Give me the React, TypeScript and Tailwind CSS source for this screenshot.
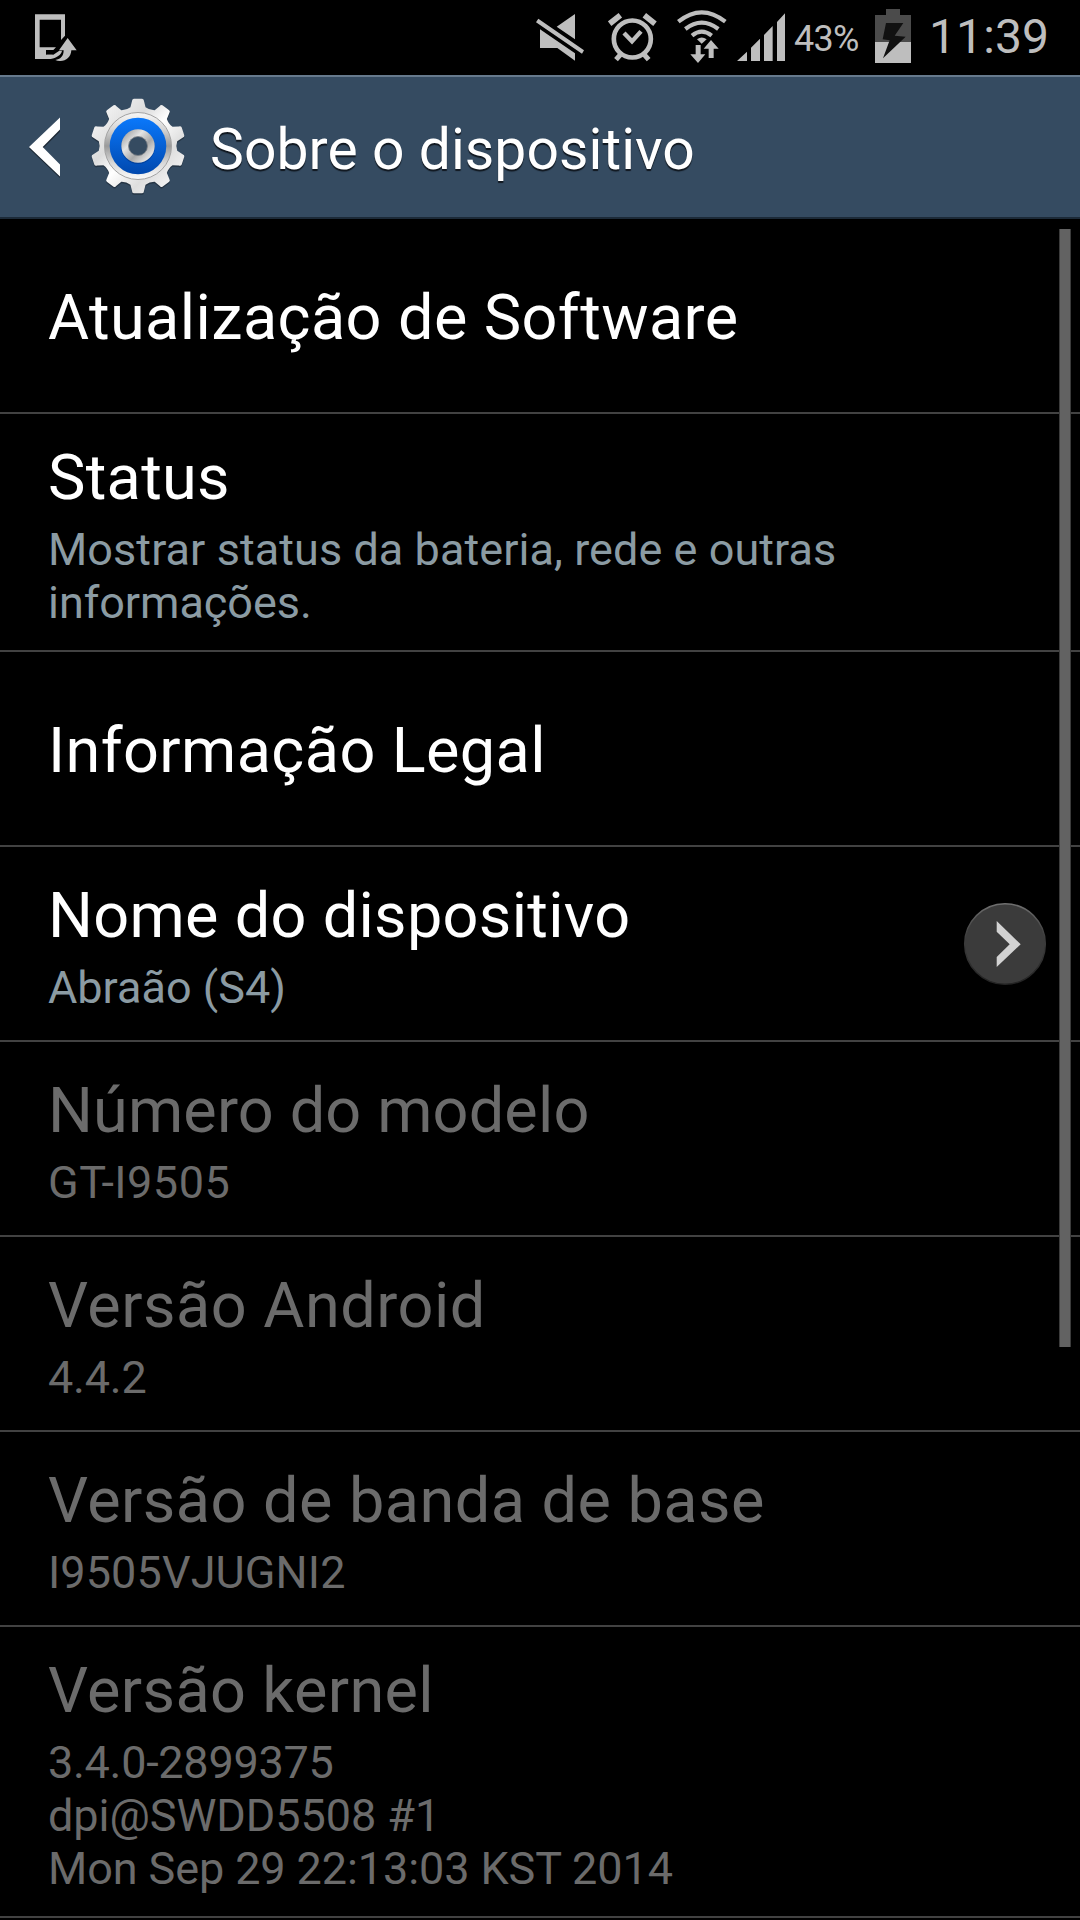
import type { ReactNode } from "react";

const GRAY = "#bebebe";

function gearPath(cx: number, cy: number, outer: number, inner: number, teeth: number) {
  const pts: string[] = [];
  const step = 360 / teeth;
  const at = (r: number, deg: number) => {
    const a = ((deg - 90) * Math.PI) / 180;
    return `${(cx + r * Math.cos(a)).toFixed(2)} ${(cy + r * Math.sin(a)).toFixed(2)}`;
  };
  for (let i = 0; i < teeth; i++) {
    const c = i * step;
    pts.push(
      `${i === 0 ? "M" : "L"}${at(inner, c - 11)}`,
      `L${at(outer - 2.2, c - 7.6)}`,
      `Q${at(outer, c - 7.2)} ${at(outer, c - 5)}`,
      `L${at(outer, c + 5)}`,
      `Q${at(outer, c + 7.2)} ${at(outer - 2.2, c + 7.6)}`,
      `L${at(inner, c + 11)}`,
      `Q${at(inner - 2, c + step / 2)} ${at(inner, c + step - 11)}`
    );
  }
  return pts.join(" ") + "Z";
}

function GearIcon() {
  return (
    <svg className="ml-[29px] -mt-[2px] size-[98px] shrink-0" viewBox="-49 -49 98 98">
      <defs>
        <linearGradient id="metal" x1="0" y1="0" x2="1" y2="1">
          <stop offset="0.1" stopColor="#f4f4f4" />
          <stop offset="0.35" stopColor="#dcdcdc" />
          <stop offset="0.5" stopColor="#ffffff" />
          <stop offset="0.7" stopColor="#dedede" />
          <stop offset="0.9" stopColor="#f6f6f6" />
        </linearGradient>
        <linearGradient id="rim" x1="0" y1="0" x2="0" y2="1">
          <stop offset="0" stopColor="#f7f7f7" />
          <stop offset="0.25" stopColor="#d6d6d6" />
          <stop offset="0.5" stopColor="#9a9a9a" />
          <stop offset="0.75" stopColor="#d8d8d8" />
          <stop offset="1" stopColor="#fafafa" />
        </linearGradient>
        <linearGradient id="blue" x1="0" y1="0" x2="0" y2="1">
          <stop offset="0" stopColor="#0a78fb" />
          <stop offset="1" stopColor="#0048ae" />
        </linearGradient>
        <linearGradient id="hub" x1="0" y1="0" x2="1" y2="1">
          <stop offset="0.1" stopColor="#a4a4a4" />
          <stop offset="0.35" stopColor="#e4e4e4" />
          <stop offset="0.6" stopColor="#a9a9a9" />
          <stop offset="0.9" stopColor="#f2f2f2" />
        </linearGradient>
      </defs>
      <path d={gearPath(0, 1.5, 47.5, 39.5, 10)} fill="#17222e" opacity="0.55" />
      <path d={gearPath(0, 0, 47.5, 39.5, 10)} fill="url(#metal)" />
      <circle r="33.5" fill="url(#rim)" stroke="#a3a3a3" strokeWidth="1" />
      <circle r="28.3" fill="url(#blue)" />
      <circle cy="1" r="17" fill="#003a90" opacity="0.7" />
      <circle r="16.7" fill="url(#hub)" />
      <circle r="9.5" fill="#354b61" stroke="#7e8186" strokeWidth="0.8" />
    </svg>
  );
}

function StatusBar() {
  return (
    <div className="flex h-[75px] shrink-0 items-start text-[#bebebe]">
      <svg className="ml-[35px] mt-[14px] h-[48px] w-[42px]" viewBox="105 42 126 144" fill={GRAY}>
        <path fillRule="evenodd" d="M105 43H195V107L183 120V59H119V142H168L160 150H138V164H158L150 177H105Z" />
        <path d="M203 114L230 151H214C213 171 198 184 179 183C174 183 170 182 166 180C181 178 191 169 191 151H177Z" />
        <path d="M140 164H160L178 152H186C184 164 172 172 152 177H140Z" />
      </svg>
      <svg className="ml-[459px] mt-[13px] h-[49px] w-[49px]" viewBox="48 39 147 147" fill={GRAY}>
        <path d="M55 56L192 151L186 161L48 67ZM110 80L165 42V118ZM60 88L165 160V182L112 144H60Z" />
      </svg>
      <svg className="ml-[23px] mt-[13px] h-[49px] w-[49px]" viewBox="263 39 147 147" fill="none" stroke={GRAY}>
        <circle cx="336" cy="117" r="55.5" strokeWidth="14" />
        <path d="M311 99L335 124L362 94" strokeWidth="13" />
        <path d="M268 71L300 46M372 46L404 71" strokeWidth="17" />
        <path d="M301 163L287 179M371 163L385 179" strokeWidth="15" />
      </svg>
      <svg className="ml-[20px] mt-[9px] h-[55px] w-[50px]" viewBox="469 27 150 165">
        <g fill="none" stroke={GRAY} strokeWidth="12.5">
          <path d="M473 65Q543 9 614 65" />
          <path d="M494 87Q543 49 593 87" />
          <path d="M514 107Q543 83 573 107" />
        </g>
        <path d="M529 118Q543 107 558 118L543 131Z" fill={GRAY} />
        <path d="M525 135H540V163H554L532 189L509 163H525ZM571 120L594 146H579V174H564V146H549Z" fill={GRAY} />
      </svg>
      <svg className="ml-[10px] mt-[13px] h-[48px] w-[48px]" viewBox="651 39 144 144" fill={GRAY}>
        <path d="M651 183L681 155V183ZM693 183V143L720 116V183ZM732 183V105L758 78V183ZM771 183V66L795 40V183Z" />
      </svg>
      <span className="ml-[9px] mt-[18px] w-[81px] text-[36px] leading-[42px] tracking-[-0.7px]">43%</span>
      <svg className="mt-[9px] h-[54px] w-[36px]" viewBox="285 27 108 162">
        <path d="M285 45H318V27H360V45H393V126H285Z" fill="#4b4b4b" />
        <path d="M285 126H393V189H285Z" fill={GRAY} />
        <path d="M318 69H370L344 107L377 110L309 175L329 121L308 118Z" fill="#111111" />
      </svg>
      <span className="ml-[18px] mt-[9px] text-[48px] leading-[56px] tracking-[0.1px]">11:39</span>
    </div>
  );
}

function Header() {
  return (
    <header className="flex h-[144px] shrink-0 items-center border-t-2 border-b-2 border-t-[#667a8d] border-b-[#1c2a38] bg-[#354b61]">
      <svg className="ml-[29px] h-[64px] w-[31px] shrink-0 overflow-visible" viewBox="0 0 31 64">
        <path d="M0 33.500L31 4V16.500L14 33.500L31 50.500V63Z" fill="#1d2935" />
        <path d="M0 32L31 2.500V14.500L13.700 32L31 49.500V61.500Z" fill="#ffffff" />
      </svg>
      <GearIcon />
      <h1 className="ml-[23px] mt-[5px] text-[57px] leading-[67px] tracking-[0.07px] text-white [text-shadow:0_2px_1px_#10171f]">
        Sobre o dispositivo
      </h1>
    </header>
  );
}

interface RowProps {
  title: string;
  spacing: string;
  disabled?: boolean;
  action?: ReactNode;
  children?: ReactNode;
}

function Row({ title, spacing, disabled, action, children }: RowProps) {
  return (
    <li className={`flex min-h-[195px] items-center border-b-2 border-[#424242] pb-[21px] pl-12 ${children ? "pt-[27px]" : "pt-[26px]"}`}>
      <div className="flex-1 whitespace-nowrap">
        <h2 className={`text-[63px] leading-[74px] ${spacing} ${disabled ? "text-[#6b6b6b]" : "text-white"}`}>{title}</h2>
        {children && (
          <div className={`mt-[8px] text-[45px] leading-[53px] ${disabled ? "text-[#6b6b6b]" : "text-[#8b9ba3]"}`}>{children}</div>
        )}
      </div>
      {action}
    </li>
  );
}

function ChevronButton() {
  return (
    <button className="mr-[33px] mb-[6px] block size-[84px]" aria-label="Editar">
      <svg viewBox="0 0 84 84">
        <defs>
          <linearGradient id="edge" x1="0" y1="0" x2="0" y2="1">
            <stop offset="0" stopColor="#707070" />
            <stop offset="0.4" stopColor="#3e3e3e" />
            <stop offset="1" stopColor="#232323" />
          </linearGradient>
        </defs>
        <circle cx="42" cy="42" r="40.300" fill="#3b3b3b" stroke="url(#edge)" strokeWidth="1.500" />
        <path d="M33.700 19L57.700 42.300L33.700 65V55L46.700 42.300L33.700 29.700Z" fill="#d2d2d2" />
      </svg>
    </button>
  );
}

export default function App() {
  return (
    <div className="relative flex h-[1920px] w-[1080px] flex-col overflow-hidden bg-black font-[Roboto,sans-serif]">
      <StatusBar />
      <Header />
      <ul>
        <Row title="Atualização de Software" spacing="tracking-[0.4px]" />
        <Row title="Status" spacing="tracking-[0.28px]">
          <p className="tracking-[0.06px]">Mostrar status da bateria, rede e outras</p>
          <p className="tracking-[-0.06px]">informações.</p>
        </Row>
        <Row title="Informação Legal" spacing="tracking-[0.39px]" />
        <Row title="Nome do dispositivo" spacing="tracking-[0.3px]" action={<ChevronButton />}>
          <p>Abraão (S4)</p>
        </Row>
        <Row title="Número do modelo" spacing="tracking-[0.15px]" disabled>
          <p className="tracking-[0.5px]">GT-I9505</p>
        </Row>
        <Row title="Versão Android" spacing="tracking-[0.5px]" disabled>
          <p className="tracking-[-0.2px]">4.4.2</p>
        </Row>
        <Row title="Versão de banda de base" spacing="tracking-[0.45px]" disabled>
          <p className="tracking-[0.1px]">I9505VJUGNI2</p>
        </Row>
        <Row title="Versão kernel" spacing="tracking-[0.35px]" disabled>
          <p className="tracking-[-0.28px]">3.4.0-2899375</p>
          <p className="tracking-[-0.06px]">dpi@SWDD5508 #1</p>
          <p className="tracking-[-0.1px]">Mon Sep 29 22:13:03 KST 2014</p>
        </Row>
      </ul>
      <div className="absolute top-[229px] right-[9px] h-[1118px] w-[12px] border-x border-[#3c3c3c] bg-[#626262]" />
    </div>
  );
}
